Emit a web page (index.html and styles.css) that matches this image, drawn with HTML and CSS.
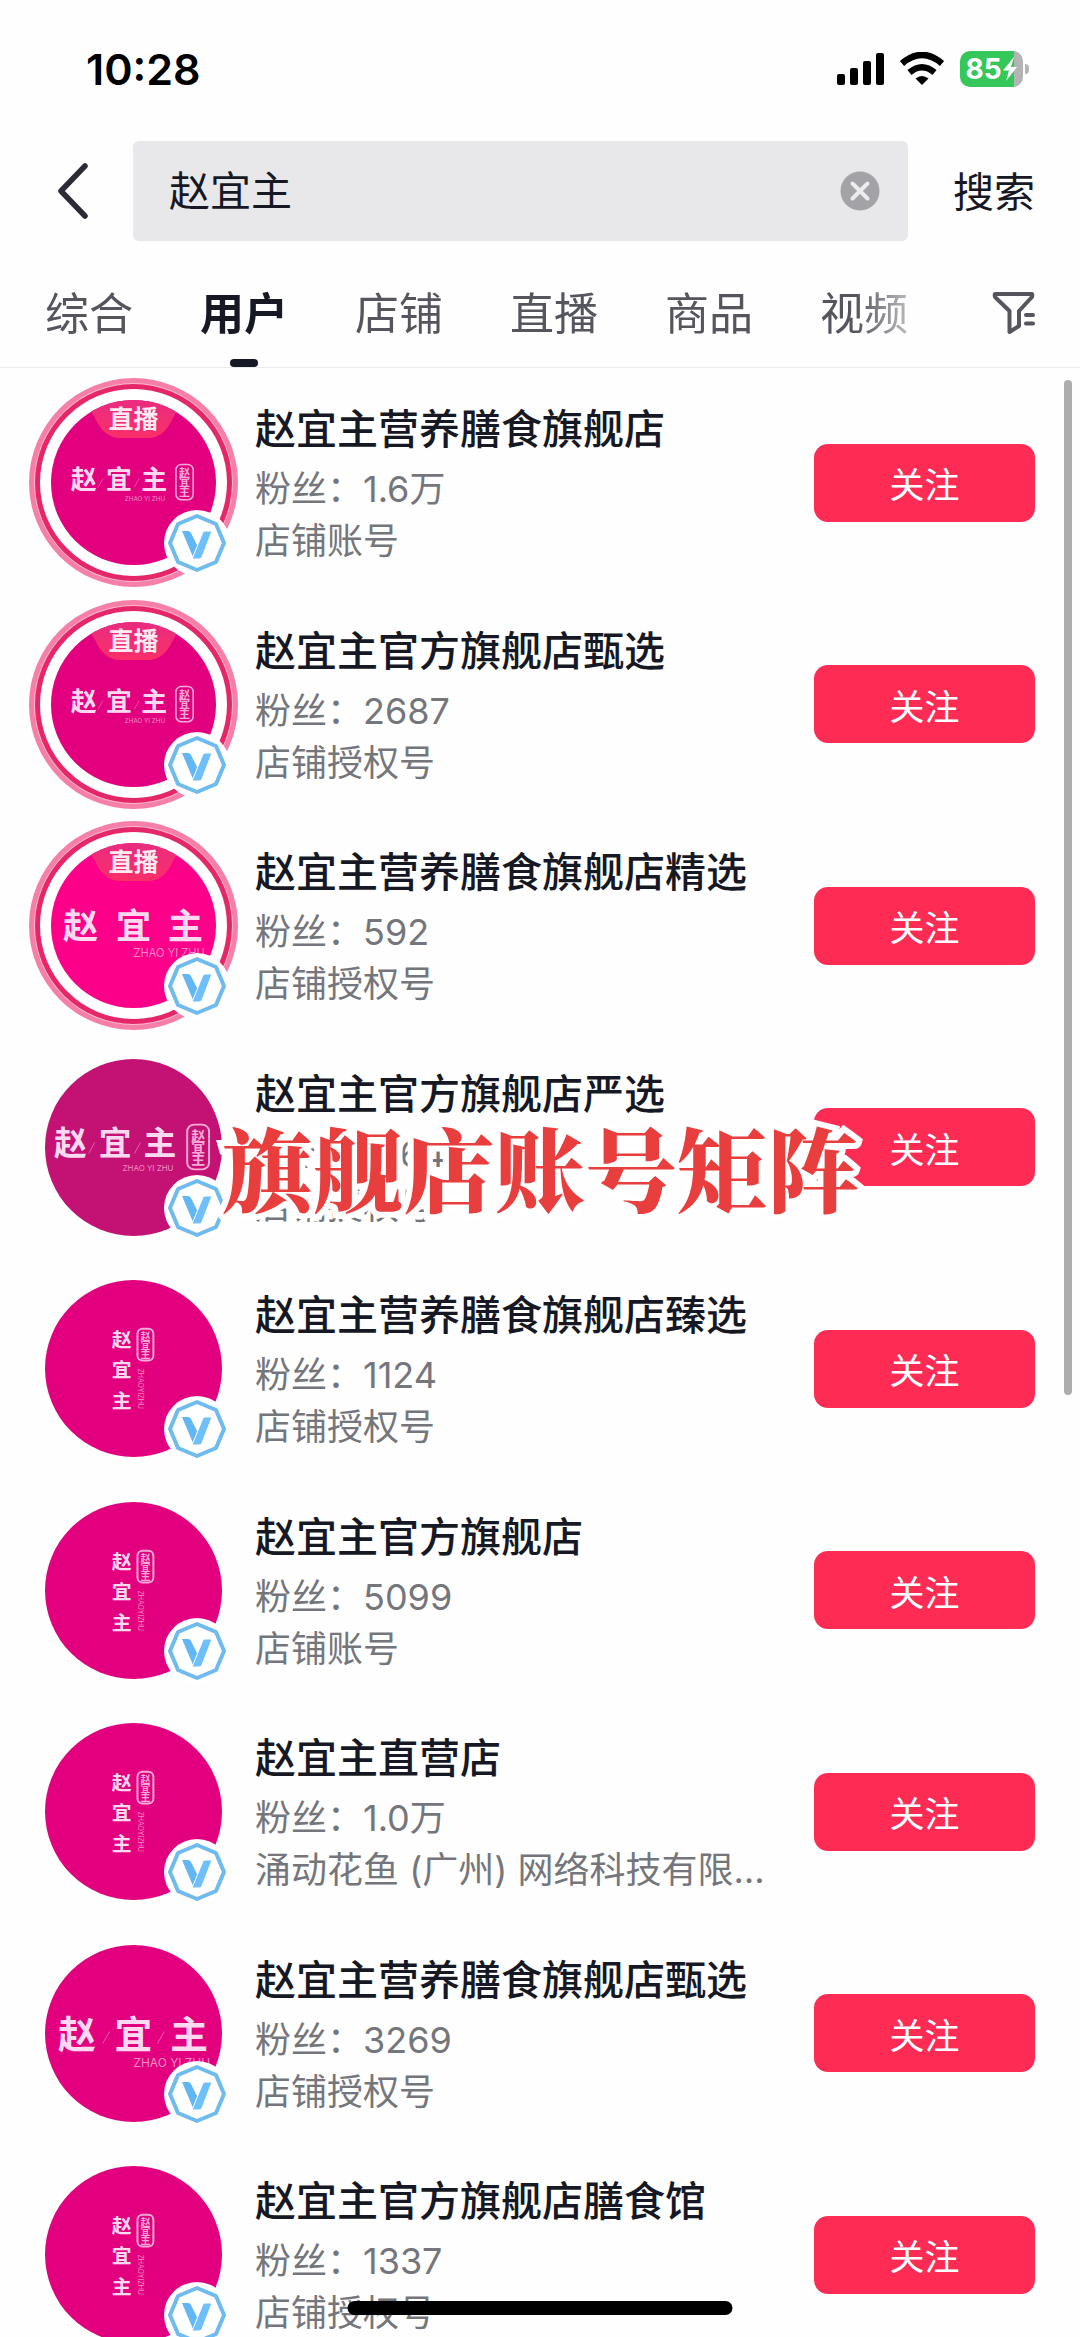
FILE: index.html
```html
<!DOCTYPE html>
<html lang="zh-CN">
<head>
<meta charset="utf-8">
<meta name="viewport" content="width=device-width, initial-scale=1">
<title>赵宜主 - 搜索</title>
<link rel="stylesheet" href="styles.css">
</head>
<body>
<svg class="defs" aria-hidden="true">
  <linearGradient id="live-fill" x1="0" y1="0" x2="0" y2="1"><stop offset="0" stop-color="#e92c80"/><stop offset="1" stop-color="#fa2f68"/></linearGradient>
  <symbol id="verified" viewBox="-33 -33 66 66">
    <circle r="33" fill="#fff"/>
    <path d="M0-27 19-19 27 0 19 19 0 27-19 19-27 0-19-19Z" fill="#fff" stroke="#6fbbee" stroke-width="4" stroke-linejoin="round"/>
    <path d="M-15-12H-9Q-7-12-6-10L1 4-4 14Z" fill="#62b6f3"/>
    <path d="M8-12H15L5 14Q4 16 2 16H-5L6-11Q7-12 8-12Z" fill="#6fc0fa" stroke="#fff" stroke-width="1"/>
  </symbol>
  <symbol id="live-tab" viewBox="0 0 104 39">
    <path d="M0 0V4Q8 8 13 18Q22 38 38 38H66Q82 38 91 18Q96 8 104 4V0Z" fill="url(#live-fill)"/>
  </symbol>
</svg>

<div class="status">
  <time class="clock">10:28</time>
  <div class="status-icons">
    <svg width="47" height="34" viewBox="0 0 47 34"><rect y="22" width="8" height="11" rx="2"/><rect x="13" y="16" width="8" height="17" rx="2"/><rect x="26" y="9" width="8" height="24" rx="2"/><rect x="39" y="1" width="8" height="32" rx="2"/></svg>
    <svg width="46" height="34" viewBox="0 0 46 34"><g fill="none" stroke="#000" stroke-width="6.500"><path d="M3 11.500Q23-5.500 43 11.500"/><path d="M10.500 20.500Q23 10 35.500 20.500"/></g><path d="M16.500 26.500Q23 21.500 29.500 26.500L23 33Z"/></svg>
    <div class="battery"><span>85</span><svg width="16" height="26" viewBox="0 0 16 26"><path d="M12 1 1 14.500H7L4 25 15 11H9Z" fill="#fff"/></svg></div>
  </div>
</div>

<form class="search">
  <button class="back" type="button" aria-label="返回"><svg width="32" height="56" viewBox="0 0 32 56"><path d="M28 3 4 28 28 53" fill="none" stroke="#2c2c36" stroke-width="5.500" stroke-linecap="round" stroke-linejoin="round"/></svg></button>
  <div class="field">
    <input class="field-input" type="text" value="赵宜主" aria-label="搜索关键词">
    <button class="clear" type="button" aria-label="清除"><svg width="40" height="40" viewBox="0 0 40 40"><circle cx="20" cy="20" r="19.500" fill="#a2a2a7"/><path d="M12.500 12.500 27.500 27.500M27.500 12.500 12.500 27.500" stroke="#ececef" stroke-width="4" stroke-linecap="round"/></svg></button>
  </div>
  <button class="submit" type="button">搜索</button>
</form>

<nav class="tabs">
  <div class="tab-strip">
    <a class="tab" href="#">综合</a>
    <a class="tab active" href="#" aria-current="page">用户</a>
    <a class="tab" href="#">店铺</a>
    <a class="tab" href="#">直播</a>
    <a class="tab" href="#">商品</a>
    <a class="tab" href="#">视频</a>
  </div>
  <button class="filter" type="button" aria-label="筛选"><svg width="44" height="44" viewBox="0 0 44 44"><path d="M3 3H40Q41 5 39 7L27 20V35L17.500 41V20L4 7Q2 5 3 3Z" fill="none" stroke="#55555e" stroke-width="4" stroke-linejoin="round"/><path d="M34 24H41M34 32.500H41" stroke="#55555e" stroke-width="4" stroke-linecap="round"/></svg></button>
</nav>

<main class="results">
  <ul class="list">
    <li class="row">
      <div class="avatar live"><div class="face"><svg class="logo" viewBox="-105 -105 210 210"><text class="ch" font-size="33" x="-80 -35 10" y="8">赵宜主</text><path class="slash" d="M-45 6-39-5M1 6 7-5"/><text class="py" font-size="8" x="-11" y="24">ZHAO YI ZHU</text><rect class="seal" x="54" y="-23" width="22" height="45" rx="7"/><text class="st" font-size="14" x="58 58 58" y="-7 5 17">赵宜主</text></svg><svg class="live-shape"><use href="#live-tab"/></svg><span class="live-text">直播</span></div><svg class="badge"><use href="#verified"/></svg></div>
      <div class="info"><h2 class="name">赵宜主营养膳食旗舰店</h2><p class="meta">粉丝：1.6万</p><p class="meta">店铺账号</p></div>
      <button class="follow" type="button">关注</button>
    </li>
    <li class="row">
      <div class="avatar live"><div class="face"><svg class="logo" viewBox="-105 -105 210 210"><text class="ch" font-size="33" x="-80 -35 10" y="8">赵宜主</text><path class="slash" d="M-45 6-39-5M1 6 7-5"/><text class="py" font-size="8" x="-11" y="24">ZHAO YI ZHU</text><rect class="seal" x="54" y="-23" width="22" height="45" rx="7"/><text class="st" font-size="14" x="58 58 58" y="-7 5 17">赵宜主</text></svg><svg class="live-shape"><use href="#live-tab"/></svg><span class="live-text">直播</span></div><svg class="badge"><use href="#verified"/></svg></div>
      <div class="info"><h2 class="name">赵宜主官方旗舰店甄选</h2><p class="meta">粉丝：2687</p><p class="meta">店铺授权号</p></div>
      <button class="follow" type="button">关注</button>
    </li>
    <li class="row">
      <div class="avatar live"><div class="face bright"><svg class="logo" viewBox="-89 -89 178 178"><text class="ch" font-size="38" x="-76 -19 37" y="15">赵宜主</text><text class="py" font-size="12" x="0" y="34">ZHAO YI ZHU</text></svg><svg class="live-shape"><use href="#live-tab"/></svg><span class="live-text">直播</span></div><svg class="badge"><use href="#verified"/></svg></div>
      <div class="info"><h2 class="name">赵宜主营养膳食旗舰店精选</h2><p class="meta">粉丝：592</p><p class="meta">店铺授权号</p></div>
      <button class="follow" type="button">关注</button>
    </li>
    <li class="row">
      <div class="avatar"><div class="face deep"><svg class="logo" viewBox="-89 -89 178 178"><text class="ch" font-size="33" x="-80 -35 10" y="8">赵宜主</text><path class="slash" d="M-45 6-39-5M1 6 7-5"/><text class="py" font-size="8" x="-11" y="24">ZHAO YI ZHU</text><rect class="seal" x="54" y="-23" width="22" height="45" rx="7"/><text class="st" font-size="14" x="58 58 58" y="-7 5 17">赵宜主</text></svg></div><svg class="badge"><use href="#verified"/></svg></div>
      <div class="info"><h2 class="name">赵宜主官方旗舰店严选</h2><p class="meta">粉丝：2164</p><p class="meta">店铺授权号</p></div>
      <button class="follow" type="button">关注</button>
    </li>
    <li class="row">
      <div class="avatar"><div class="face"><svg class="logo" viewBox="-89 -89 178 178"><text class="ch" font-size="20" x="-22 -22 -22" y="-22 9 40">赵宜主</text><rect class="seal" x="4" y="-40" width="16" height="32" rx="5"/><text class="st" font-size="10" x="7 7 7" y="-29 -20 -11">赵宜主</text><text class="py" font-size="7" transform="translate(5 0) rotate(90)">ZHAOYIZHU</text></svg></div><svg class="badge"><use href="#verified"/></svg></div>
      <div class="info"><h2 class="name">赵宜主营养膳食旗舰店臻选</h2><p class="meta">粉丝：1124</p><p class="meta">店铺授权号</p></div>
      <button class="follow" type="button">关注</button>
    </li>
    <li class="row">
      <div class="avatar"><div class="face"><svg class="logo" viewBox="-89 -89 178 178"><text class="ch" font-size="20" x="-22 -22 -22" y="-22 9 40">赵宜主</text><rect class="seal" x="4" y="-40" width="16" height="32" rx="5"/><text class="st" font-size="10" x="7 7 7" y="-29 -20 -11">赵宜主</text><text class="py" font-size="7" transform="translate(5 0) rotate(90)">ZHAOYIZHU</text></svg></div><svg class="badge"><use href="#verified"/></svg></div>
      <div class="info"><h2 class="name">赵宜主官方旗舰店</h2><p class="meta">粉丝：5099</p><p class="meta">店铺账号</p></div>
      <button class="follow" type="button">关注</button>
    </li>
    <li class="row">
      <div class="avatar"><div class="face"><svg class="logo" viewBox="-89 -89 178 178"><text class="ch" font-size="20" x="-22 -22 -22" y="-22 9 40">赵宜主</text><rect class="seal" x="4" y="-40" width="16" height="32" rx="5"/><text class="st" font-size="10" x="7 7 7" y="-29 -20 -11">赵宜主</text><text class="py" font-size="7" transform="translate(5 0) rotate(90)">ZHAOYIZHU</text></svg></div><svg class="badge"><use href="#verified"/></svg></div>
      <div class="info"><h2 class="name">赵宜主直营店</h2><p class="meta">粉丝：1.0万</p><p class="meta">涌动花鱼 (广州) 网络科技有限…</p></div>
      <button class="follow" type="button">关注</button>
    </li>
    <li class="row">
      <div class="avatar"><div class="face"><svg class="logo" viewBox="-89 -89 178 178"><text class="ch" font-size="38" x="-76 -19 37" y="15">赵宜主</text><path class="slash" d="M-31 10-24-2M24 10 31-2"/><text class="py" font-size="12" x="0" y="34">ZHAO YI ZHU</text></svg></div><svg class="badge"><use href="#verified"/></svg></div>
      <div class="info"><h2 class="name">赵宜主营养膳食旗舰店甄选</h2><p class="meta">粉丝：3269</p><p class="meta">店铺授权号</p></div>
      <button class="follow" type="button">关注</button>
    </li>
    <li class="row">
      <div class="avatar"><div class="face"><svg class="logo" viewBox="-89 -89 178 178"><text class="ch" font-size="20" x="-22 -22 -22" y="-22 9 40">赵宜主</text><rect class="seal" x="4" y="-40" width="16" height="32" rx="5"/><text class="st" font-size="10" x="7 7 7" y="-29 -20 -11">赵宜主</text><text class="py" font-size="7" transform="translate(5 0) rotate(90)">ZHAOYIZHU</text></svg></div><svg class="badge"><use href="#verified"/></svg></div>
      <div class="info"><h2 class="name">赵宜主官方旗舰店膳食馆</h2><p class="meta">粉丝：1337</p><p class="meta">店铺授权号</p></div>
      <button class="follow" type="button">关注</button>
    </li>
  </ul>
  <div class="scrollbar"></div>
</main>

<div class="caption"><strong class="caption-text">旗舰店账号矩阵</strong></div>
<div class="home-bar"></div>
</body>
</html>
```
FILE: styles.css
```css
* { box-sizing: border-box; margin: 0; padding: 0; }

body {
  display: flex;
  flex-direction: column;
  height: 100vh;
  overflow: hidden;
  background: #fefefe;
  color: #161823;
  font-family: Inter, "Noto Sans CJK SC", sans-serif;
}

button { border: 0; background: none; font: inherit; color: inherit; }
button svg, .status svg { display: block; }
.defs { position: absolute; width: 0; height: 0; }

/* status bar */
.status {
  flex: none;
  display: flex;
  align-items: center;
  justify-content: space-between;
  height: 141px;
  padding: 0 51px 4px 86px;
  color: #000;
}
.clock { font-size: 43px; font-weight: 600; line-height: 48px; }
.status-icons { display: flex; align-items: center; gap: 15px; }
.battery {
  position: relative;
  display: flex;
  align-items: center;
  justify-content: center;
  width: 63px;
  height: 36px;
  margin-right: 6px;
  border-radius: 10px;
  background: linear-gradient(90deg, #35c759 85%, #b4b4b4 85%);
  color: #fff;
  font-size: 28px;
  font-weight: 700;
  line-height: 36px;
}
.battery::after {
  content: "";
  position: absolute;
  right: -6px;
  top: 13px;
  width: 4px;
  height: 10px;
  border-radius: 0 4px 4px 0;
  background: #b4b4b4;
}

/* search bar */
.search { flex: none; display: flex; align-items: stretch; height: 100px; }
.back { width: 133px; padding-left: 57px; }
.field {
  flex: 1;
  min-width: 0;
  display: flex;
  align-items: center;
  padding: 0 28px 0 36px;
  border-radius: 6px;
  background: #e8e8ea;
}
.field-input {
  flex: 1;
  min-width: 0;
  border: 0;
  outline: 0;
  background: none;
  color: #161823;
  font: 400 41px/60px Inter, "Noto Sans CJK SC", sans-serif;
}
.submit { width: 172px; padding-bottom: 4px; font-size: 41px; }

/* tabs */
.tabs {
  flex: none;
  display: flex;
  justify-content: space-between;
  height: 127px;
  padding: 0 44px 0 45px;
  border-bottom: 1px solid #ebebed;
}
.tab-strip {
  display: flex;
  gap: 67px;
  -webkit-mask-image: linear-gradient(90deg, #000 94%, rgba(0, 0, 0, .4));
  mask-image: linear-gradient(90deg, #000 94%, rgba(0, 0, 0, .4));
}
.tab {
  position: relative;
  padding-top: 41px;
  color: #55555e;
  font-size: 44px;
  line-height: 64px;
  text-decoration: none;
  white-space: nowrap;
}
.tab.active { color: #161823; font-weight: 700; }
.tab.active::after {
  content: "";
  position: absolute;
  left: 50%;
  bottom: 0;
  width: 28px;
  height: 8px;
  margin-left: -14px;
  border-radius: 4px;
  background: #161823;
}
.filter { padding-top: 18px; }

/* results */
.results { position: relative; flex: 1; min-height: 0; overflow: hidden; }
.list { list-style: none; padding-top: 4px; }
.row {
  display: flex;
  align-items: center;
  height: 221px;
  padding: 0 45px 0 29px;
}
.row:nth-child(even) { height: 222px; }

.avatar {
  position: relative;
  flex: none;
  display: grid;
  place-items: center;
  width: 209px;
  height: 209px;
}
.face {
  position: relative;
  width: 177px;
  height: 177px;
  border-radius: 50%;
  overflow: hidden;
  background: #e3007f;
}
.face.bright { background: #fc008a; }
.face.deep { background: #c31273; }
.live .face {
  width: 165px;
  height: 165px;
  box-shadow: 0 0 0 11px #fff, 0 0 0 16px #e5276a, 0 0 0 17px #fbb6cf, 0 0 0 22px #f67fa8;
}
.logo { display: block; width: 100%; height: 100%; }
.ch { fill: #fcd9f0; font-weight: 700; }
.py { fill: #f58bc8; }
.st { fill: #f9a9d8; font-weight: 700; }
.slash { stroke: #ee5cae; stroke-width: 1; }
.seal { fill: none; stroke: #f9a9d8; stroke-width: 2; }
.live-shape { position: absolute; left: 50%; top: 0; width: 104px; height: 39px; margin-left: -52px; }
.live-text {
  position: absolute;
  inset: 0 0 auto;
  color: #ffeaf2;
  font-size: 25px;
  font-weight: 700;
  line-height: 38px;
  text-align: center;
}
.badge { position: absolute; right: 8px; bottom: 11px; width: 66px; height: 66px; }

.info { flex: 1; min-width: 0; padding: 0 36px 3px 17px; }
.name { font-size: 41px; font-weight: 500; line-height: 68px; white-space: nowrap; }
.meta {
  overflow: hidden;
  color: #75767b;
  font-size: 36px;
  line-height: 52px;
  text-overflow: ellipsis;
  white-space: nowrap;
}
.follow {
  flex: none;
  width: 221px;
  height: 78px;
  border-radius: 14px;
  background: #fe2c55;
  color: #fff;
  font-size: 35px;
}

.scrollbar {
  position: absolute;
  top: 12px;
  right: 8px;
  width: 8px;
  height: 1015px;
  border-radius: 4px;
  background: #adadad;
}

/* overlays */
.caption {
  position: fixed;
  inset: 0;
  display: grid;
  place-items: center;
  padding-bottom: 6px;
  pointer-events: none;
}
.caption-text {
  color: #e83e3e;
  font-family: "Noto Serif CJK SC", "Noto Sans CJK SC", serif;
  font-size: 91px;
  font-weight: 900;
  line-height: 120px;
  white-space: nowrap;
  -webkit-text-stroke: 12px #fff;
  paint-order: stroke fill;
}
.home-bar {
  position: fixed;
  left: 50%;
  bottom: 22px;
  width: 385px;
  height: 14px;
  border-radius: 7px;
  background: #000;
  transform: translateX(-50%);
}
```
